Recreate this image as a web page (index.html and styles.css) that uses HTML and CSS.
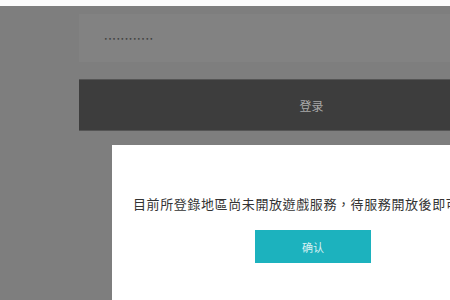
FILE: index.html
```html
<!DOCTYPE html>
<html lang="zh-Hant">

<head>
    <meta charset="UTF-8">
    <meta name="viewport" content="width=device-width, initial-scale=1.0">
    <title>登录</title>
    <link rel="stylesheet" href="styles.css">
</head>

<body>
    <div class="topbar"></div>

    <main class="login">
        <div class="field">
            <span class="password">••••••••••••</span>
        </div>
        <div class="submit">登录</div>
    </main>

    <div class="dialog">
        <p class="msg">目前所登錄地區尚未開放遊戲服務，待服務開放後即可</p>
        <div class="actions">
            <div class="btn">确认</div>
        </div>
    </div>
</body>

</html>
```

FILE: styles.css
```css
body {
    margin: 0;
    font-family: "Noto Sans CJK TC", "Noto Sans CJK SC", sans-serif;
    background-color: #7e7e7e;
    width: 450px;
    height: 300px;
    overflow: hidden;
    position: relative;
}

.topbar {
    height: 6px;
    background-color: #fbfbfb;
}

.login {
    padding-left: 79px;
}

.field {
    margin-top: 8px;
    height: 48px;
    background-color: #828282;
    display: flex;
    align-items: center;
    padding-left: 25px;
}

.password {
    font-family: "DejaVu Sans", sans-serif;
    font-size: 6px;
    letter-spacing: 0.6px;
    color: #3c3c3c;
}

.submit {
    margin-top: 17px;
    height: 50px;
    background-color: #3d3d3d;
    border-top: 1px solid #555;
    border-bottom: 1px solid #555;
    color: #a8a8a8;
    font-size: 12px;
    display: flex;
    align-items: center;
    justify-content: center;
    padding-left: 94px;
    white-space: nowrap;
}

.dialog {
    position: absolute;
    left: 112px;
    top: 145px;
    right: 0;
    bottom: 0;
    background-color: #fff;
    white-space: nowrap;
    overflow: hidden;
}

.msg {
    margin: 50px 0 0 21px;
    font-size: 13px;
    line-height: 18px;
    letter-spacing: 0.6px;
    color: #333;
}

.actions {
    padding-left: 143px;
    margin-top: 17px;
}

.btn {
    width: 116px;
    height: 33px;
    background-color: #1cb2be;
    color: #d8f1f3;
    font-size: 11px;
    display: flex;
    align-items: center;
    justify-content: center;
}
```
